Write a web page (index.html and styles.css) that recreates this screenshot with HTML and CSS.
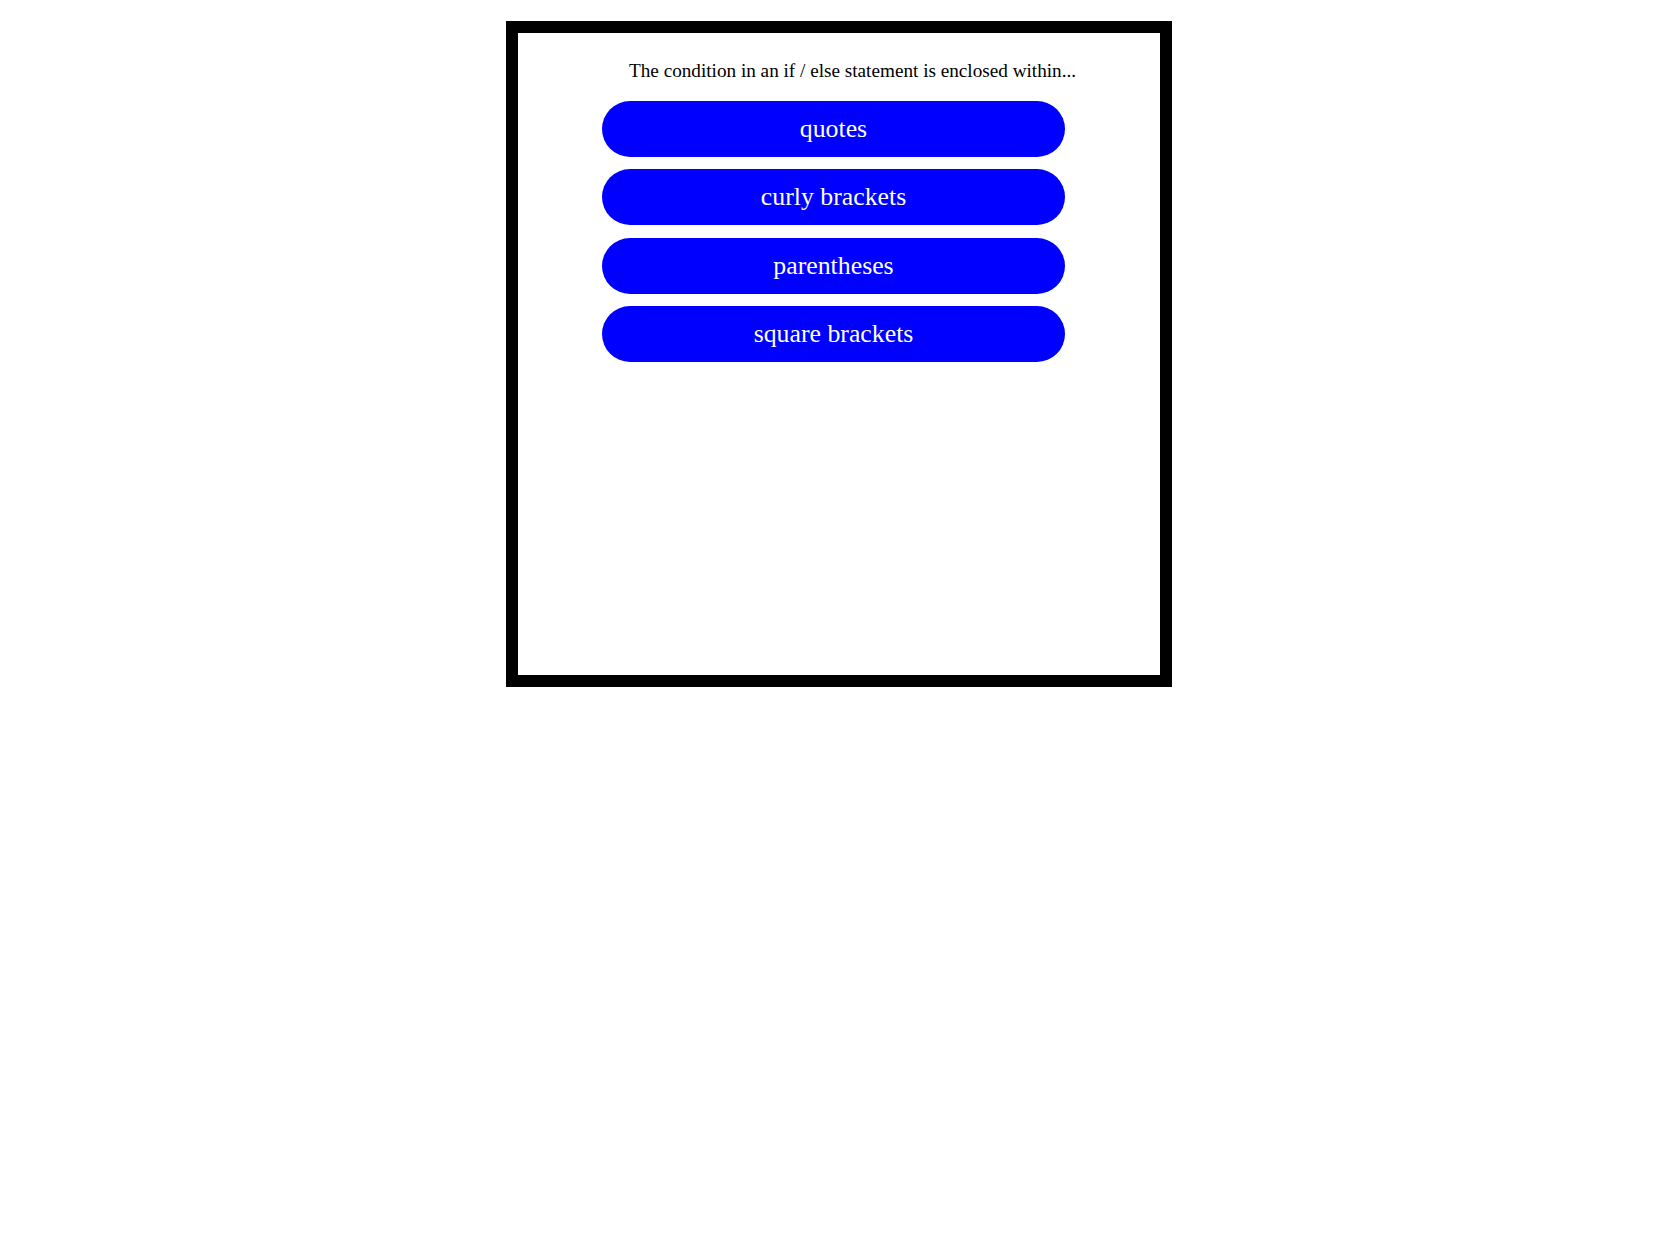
FILE: index.html
```html
<!DOCTYPE html>
<html lang="en">
<head>
    <meta charset="UTF-8">
    <meta name="viewport" content="width=device-width, initial-scale=1.0">
    <title>Quiz</title>
    <link rel="stylesheet" href="styles.css">
</head>
<body>
    <div class="quiz-box">
        <p class="question">The condition in an if / else statement is enclosed within...</p>
        <div class="answers">
            <button class="answer">quotes</button>
            <button class="answer">curly brackets</button>
            <button class="answer">parentheses</button>
            <button class="answer">square brackets</button>
        </div>
    </div>
</body>
</html>
```

FILE: styles.css
```css
body {
    font-family: "Liberation Serif", "Times New Roman", serif;
    margin: 0;
    padding: 21px 0 0 506px;
    background-color: #fff;
}
.quiz-box {
    width: 642px;
    height: 642px;
    border: 12px solid #000;
    background-color: #fff;
}
.question {
    margin: 27px 0 0 111px;
    font-size: 19.2px;
    line-height: 22px;
    color: #000;
}
.answers {
    display: flex;
    flex-direction: column;
    gap: 12.4px;
    margin: 19px 0 0 84px;
    width: 463px;
}
.answer {
    height: 56px;
    border: none;
    border-radius: 28px;
    background-color: #00f;
    color: #fff;
    font-family: "Liberation Serif", "Times New Roman", serif;
    font-size: 25.8px;
    padding: 0;
    cursor: pointer;
}
```
